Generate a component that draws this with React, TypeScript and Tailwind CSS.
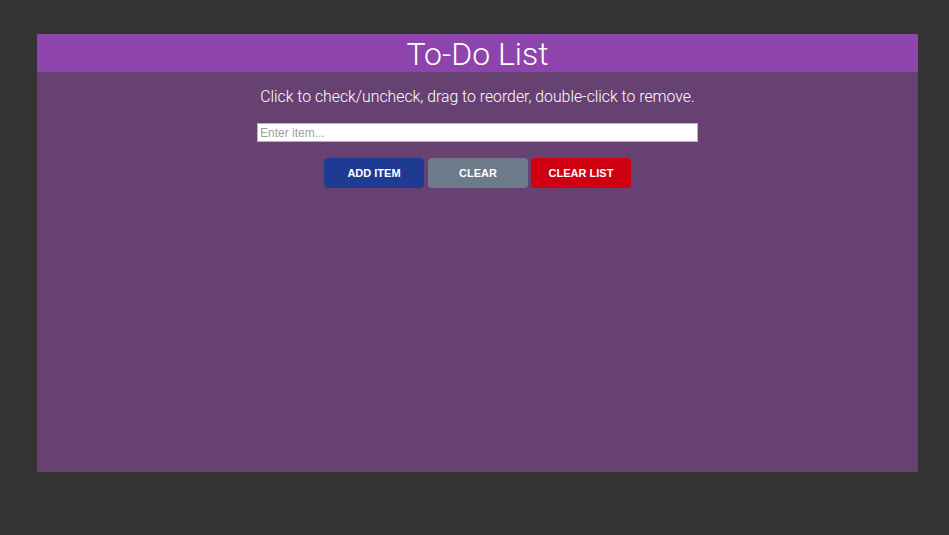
import React, { useState } from "react";

const App: React.FC = () => {
  const [item, setItem] = useState("");

  return (
    <div className="w-[949px] h-[535px] bg-[#333333] pt-[34px] pl-[37px]">
      <div className="w-[881px] h-[438px] bg-[#674172] flex flex-col items-center">
        <div className="w-full h-[38px] bg-[#8e44ad] flex items-center justify-center">
          <h1 className="text-white text-[32px] leading-none font-light font-['Roboto',sans-serif] mt-[1px]">
            To-Do List
          </h1>
        </div>
        <p className="text-white text-[15.8px] font-light font-['Roboto',sans-serif] mt-[15px] leading-[20px]">
          Click to check/uncheck, drag to reorder, double-click to remove.
        </p>
        <input
          type="text"
          value={item}
          onChange={(e) => setItem(e.target.value)}
          placeholder="Enter item..."
          className="mt-[16px] w-[441px] h-[19px] bg-white border border-[#b5b5b5] px-[2px] text-[12px] font-['Liberation_Sans',Arial,sans-serif] placeholder:text-[#a0a0a0] outline-none"
        />
        <div className="flex gap-[4px] mt-[16px] font-['Liberation_Sans',Arial,sans-serif]">
          <button className="w-[100px] h-[30px] rounded-[4px] bg-[#1f3a93] text-white text-[11px] font-bold uppercase">
            Add Item
          </button>
          <button className="w-[100px] h-[30px] rounded-[4px] bg-[#6c7a89] text-white text-[11px] font-bold uppercase">
            Clear
          </button>
          <button className="w-[100px] h-[30px] rounded-[4px] bg-[#cf000f] text-white text-[11px] font-bold uppercase -ml-[1px]">
            Clear List
          </button>
        </div>
      </div>
    </div>
  );
};

export default App;
